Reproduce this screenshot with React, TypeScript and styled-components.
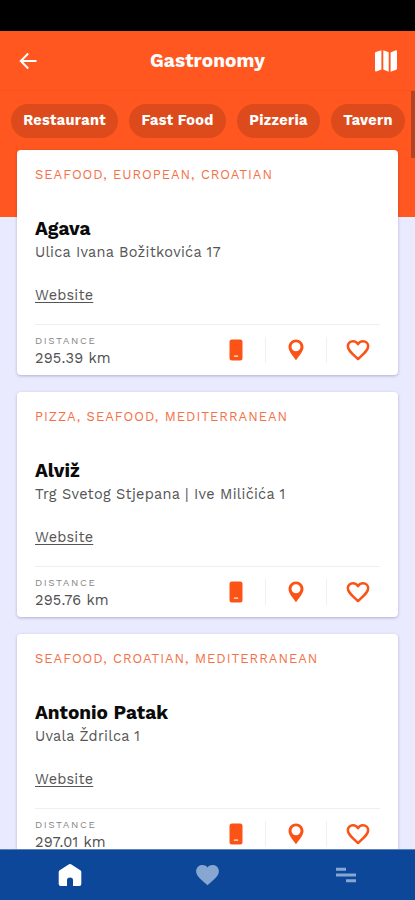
import React from 'react';
import styled, { createGlobalStyle } from 'styled-components';

const ORANGE = '#ff571f';

const GlobalStyle = createGlobalStyle`
  * { box-sizing: border-box; }
  body { margin: 0; background: #000; font-family: 'Work Sans', Inter, sans-serif; }
`;

const Screen = styled.div`
  width: 415px;
  height: 900px;
  overflow: hidden;
  display: flex;
  flex-direction: column;
  background: #e9eafe;
`;

const StatusBar = styled.div`
  height: 31px;
  flex: none;
  background: #000;
`;

const Header = styled.header`
  height: 60px;
  flex: none;
  display: grid;
  grid-template-columns: 56px 1fr 58px;
  align-items: center;
  background: ${ORANGE};
  border-bottom: 1px solid #f9521d;
  color: #fff;
`;

const IconButton = styled.button`
  border: 0;
  background: none;
  padding: 0;
  height: 44px;
  display: flex;
  align-items: center;
  justify-content: center;
  color: inherit;
`;

const Heading = styled.h1`
  margin: 0;
  padding: 1px 0 0 2px;
  text-align: center;
  font-size: 19px;
  font-weight: 700;
  line-height: 24px;
  letter-spacing: 0.1px;
`;

const Content = styled.main`
  position: relative;
  flex: 1;
  min-height: 0;
  overflow: hidden;
  background: linear-gradient(${ORANGE} 126px, #e9eafe 126px);
`;

const ScrollThumb = styled.div`
  position: absolute;
  top: 0;
  right: 0;
  width: 4px;
  height: 67px;
  background: #b5431f;
`;

const Chips = styled.div`
  display: flex;
  gap: 11px;
  padding: 13px 0 12px 11px;
`;

const Chip = styled.span<{ $width: number }>`
  flex: none;
  width: ${(p) => p.$width}px;
  height: 34px;
  border-radius: 17px;
  background: #dd4b1c;
  color: #fff;
  font-size: 14.5px;
  font-weight: 700;
  line-height: 34px;
  text-align: center;
  white-space: nowrap;
  letter-spacing: 0.3px;
`;

const CardList = styled.div`
  display: flex;
  flex-direction: column;
  gap: 17px;
  padding: 0 17px;
`;

const Card = styled.article`
  height: 225px;
  flex: none;
  padding: 15px 18px 0;
  background: #fff;
  border-radius: 4px;
  box-shadow: 0 1px 3px rgba(60, 60, 110, 0.32);
  white-space: nowrap;
`;

const Categories = styled.div`
  color: #f47048;
  font-size: 13px;
  line-height: 20px;
  letter-spacing: 0.98px;
`;

const Name = styled.h2`
  margin: 32px 0 0;
  color: #0b0b0b;
  font-size: 19px;
  font-weight: 700;
  line-height: 24px;
`;

const Address = styled.div`
  margin-top: 2px;
  color: #555;
  font-size: 14.5px;
  line-height: 20px;
  letter-spacing: 0.25px;
`;

const Website = styled.a`
  display: block;
  width: max-content;
  margin-top: 23px;
  color: #555;
  font-size: 14.5px;
  line-height: 20px;
  letter-spacing: 0.2px;
  text-decoration: underline;
  text-underline-offset: 2px;
`;

const Footer = styled.div`
  display: flex;
  justify-content: space-between;
  margin-top: 18px;
  border-top: 1px solid #efeff3;
`;

const DistanceLabel = styled.div`
  margin-top: 9px;
  color: #858585;
  font-size: 10px;
  line-height: 14px;
  letter-spacing: 1.6px;
`;

const DistanceValue = styled.div`
  margin-top: 1px;
  color: #505050;
  font-size: 14.5px;
  line-height: 19px;
  letter-spacing: 0.2px;
`;

const Actions = styled.div`
  display: flex;
  margin: 12px -8px 0 0;
  color: #fb5216;
`;

const Action = styled.button`
  width: 61px;
  height: 26px;
  padding: 0;
  border: 0;
  background: none;
  color: inherit;
  display: flex;
  align-items: center;
  justify-content: center;
  & + & { border-left: 1px solid #f1f1f4; }
  &:first-child { width: 59px; }
  &:last-child { width: 62px; }
`;

const TabBar = styled.nav`
  height: 51px;
  flex: none;
  display: grid;
  grid-template-columns: repeat(3, 1fr);
  background: #0c479a;
  border-top: 1px solid #5c82bc;
`;

const Tab = styled.a<{ $active?: boolean }>`
  display: flex;
  align-items: center;
  justify-content: center;
  padding-left: 1px;
  color: ${(p) => (p.$active ? '#fff' : '#88a6d2')};
`;

const BackIcon = () => (
  <svg width="18" height="18" viewBox="0 0 18 18" fill="none" stroke="currentColor" strokeWidth="2">
    <path d="M9.2 1.5 1.8 9l7.4 7.5M2 9h15.5" />
  </svg>
);

const MapIcon = () => (
  <svg width="24" height="24" viewBox="0 0 24 24" fill="currentColor">
    <path d="M1 4.200Q1 3.400 1.800 3L7.400 1.300v19.200L2.200 22.400Q1 22.800 1 21.600ZM9.300 1.300l5.400 2v19.500l-5.400-2.200ZM16.600 3.400l5.200-2.100Q23 .9 23 2.200v17.300q0 .8-.8 1.200L16.600 22.800Z" />
  </svg>
);

const PhoneIcon = () => (
  <svg width="14" height="22" viewBox="0 0 14 22">
    <rect x="0.5" y="0.5" width="13" height="21" rx="2.5" fill="currentColor" />
    <path d="M5.600 17.200h2.800" stroke="#ffc4ad" strokeWidth="1.800" strokeLinecap="round" />
  </svg>
);

const PinIcon = () => (
  <svg width="16" height="22" viewBox="0 0 16 22" fill="currentColor" fillRule="evenodd">
    <path d="M8 .6C3.900.6.5 3.800.5 8c0 4.400 4.700 9.200 7.500 13.200C10.800 17.200 15.500 12.400 15.500 8 15.500 3.800 12.100.6 8 .6ZM8 3.200a4.500 4.500 0 1 1 0 9 4.500 4.500 0 0 1 0-9Z" />
  </svg>
);

const HeartOutline = () => (
  <svg width="24" height="22" viewBox="1 2 22 20" fill="none" stroke="currentColor" strokeWidth="2.300" strokeLinejoin="round">
    <path d="M12 20.300 10.700 19.100C6 14.800 2.700 12.100 2.700 8.600 2.700 5.900 4.800 4 7.400 4c1.800 0 3.600.9 4.600 2.700C13 4.900 14.800 4 16.600 4c2.600 0 4.700 1.900 4.700 4.600 0 3.500-3.300 6.200-8 10.500Z" />
  </svg>
);

const HeartSolid = () => (
  <svg width="25" height="22" viewBox="1 2 22 20" fill="currentColor" preserveAspectRatio="none">
    <path d="M12 21.350 10.550 20.030C5.400 15.360 2 12.280 2 8.500 2 5.420 4.420 3 7.500 3c1.740 0 3.410.810 4.500 2.090C13.090 3.810 14.760 3 16.500 3 19.580 3 22 5.420 22 8.500c0 3.780-3.400 6.860-8.550 11.540Z" />
  </svg>
);

const HomeIcon = () => (
  <svg width="24" height="24" viewBox="0 0 24 24" fill="currentColor">
    <path d="M11 1.300a1.800 1.800 0 0 1 2 0l9.300 5.900q1 .7 1 1.900V21q0 2-2 2H15v-6q0-2.500-3-2.500T9 17v6H2.700q-2 0-2-2V9.100q0-1.200 1-1.900Z" />
  </svg>
);

const MenuIcon = () => (
  <svg width="20" height="16" viewBox="0 0 20 16" fill="currentColor">
    <path d="M0 .7h10v3H0zM0 6.500h20v3H0zM10 12.200h10v3H10z" />
  </svg>
);

const chips = [
  { label: 'Restaurant', width: 107 },
  { label: 'Fast Food', width: 97 },
  { label: 'Pizzeria', width: 83 },
  { label: 'Tavern', width: 74 },
];

const places = [
  {
    name: 'Agava',
    categories: 'SEAFOOD, EUROPEAN, CROATIAN',
    address: 'Ulica Ivana Božitkovića 17',
    distance: '295.39 km',
  },
  {
    name: 'Alviž',
    categories: 'PIZZA, SEAFOOD, MEDITERRANEAN',
    address: 'Trg Svetog Stjepana | Ive Miličića 1',
    distance: '295.76 km',
  },
  {
    name: 'Antonio Patak',
    categories: 'SEAFOOD, CROATIAN, MEDITERRANEAN',
    address: 'Uvala Ždrilca 1',
    distance: '297.01 km',
  },
];

export default function App() {
  return (
    <Screen>
      <GlobalStyle />
      <StatusBar />
      <Header>
        <IconButton aria-label="Back"><BackIcon /></IconButton>
        <Heading>Gastronomy</Heading>
        <IconButton aria-label="Map"><MapIcon /></IconButton>
      </Header>
      <Content>
        <Chips>
          {chips.map((c) => (
            <Chip key={c.label} $width={c.width}>{c.label}</Chip>
          ))}
        </Chips>
        <CardList>
          {places.map((p) => (
            <Card key={p.name}>
              <Categories>{p.categories}</Categories>
              <Name>{p.name}</Name>
              <Address>{p.address}</Address>
              <Website>Website</Website>
              <Footer>
                <div>
                  <DistanceLabel>DISTANCE</DistanceLabel>
                  <DistanceValue>{p.distance}</DistanceValue>
                </div>
                <Actions>
                  <Action aria-label="Call"><PhoneIcon /></Action>
                  <Action aria-label="Locate"><PinIcon /></Action>
                  <Action aria-label="Favourite"><HeartOutline /></Action>
                </Actions>
              </Footer>
            </Card>
          ))}
        </CardList>
        <ScrollThumb />
      </Content>
      <TabBar>
        <Tab $active aria-label="Home"><HomeIcon /></Tab>
        <Tab aria-label="Favourites"><HeartSolid /></Tab>
        <Tab aria-label="Menu"><MenuIcon /></Tab>
      </TabBar>
    </Screen>
  );
}
